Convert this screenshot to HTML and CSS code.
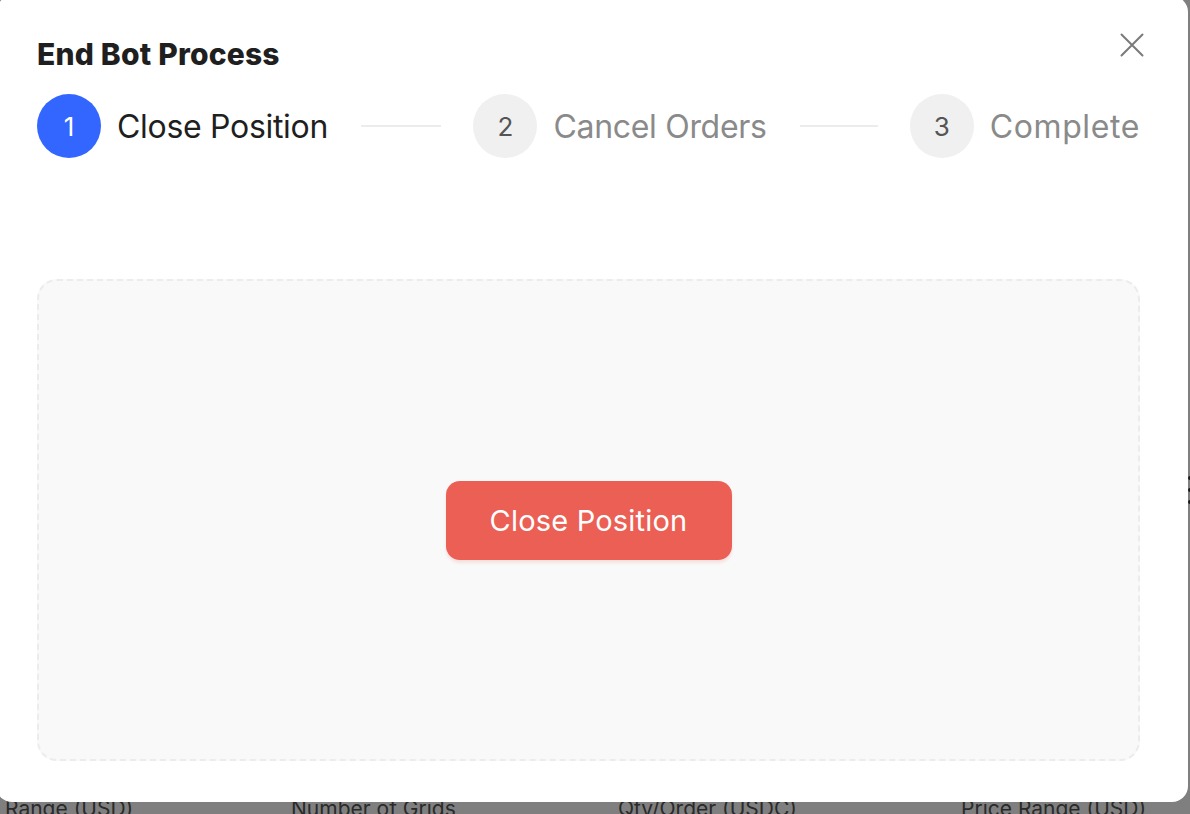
FILE: index.html
```html
<!DOCTYPE html>
<html lang="en">
<head>
<meta charset="utf-8">
<title>End Bot Process</title>
<link rel="stylesheet" href="styles.css">
</head>
<body>
<div class="page">
  <div class="page-row">
    <span class="col col-a">Range (USD)</span>
    <span class="col col-b">Number of Grids</span>
    <span class="col col-c">Qty/Order (USDC)</span>
    <span class="col col-d">Price Range (USD)</span>
  </div>
</div>
<div class="kebab"><i></i><i></i><i></i></div>

<div class="modal">
  <h2 class="modal-title">End Bot Process</h2>
  <button class="modal-close" aria-label="Close">
    <svg width="24" height="24" viewBox="0 0 24 24"><path d="M1.5 1.5 L22.5 22.5 M22.5 1.5 L1.5 22.5" stroke="#7a7a7a" stroke-width="2" fill="none" stroke-linecap="round"/></svg>
  </button>
  <div class="steps">
    <div class="step active">
      <span class="step-num">1</span>
      <span class="step-label">Close Position</span>
      <span class="step-line"></span>
    </div>
    <div class="step">
      <span class="step-num">2</span>
      <span class="step-label">Cancel Orders</span>
      <span class="step-line"></span>
    </div>
    <div class="step last">
      <span class="step-num">3</span>
      <span class="step-label">Complete</span>
    </div>
  </div>
  <div class="panel">
    <button class="btn-danger">Close Position</button>
  </div>
</div>
</body>
</html>
```

FILE: styles.css
```css
* { box-sizing: border-box; }
html, body {
  margin: 0;
  height: 100%;
  overflow: hidden;
}
body {
  background: #7f7f7f;
  font-family: "Inter", "Open Sans", sans-serif;
  position: relative;
}
.page {
  padding-top: 796px;
}
.page-row {
  display: flex;
  font-size: 21px;
  color: #2a2a2a;
  white-space: nowrap;
}
.col-a { margin-left: 5px; width: 286px; }
.col-b { width: 327px; }
.col-c { width: 343px; }

.kebab {
  position: absolute;
  left: 1188px;
  top: 476px;
  display: flex;
  flex-direction: column;
  gap: 8px;
}
.kebab i {
  display: block;
  width: 4px;
  height: 4px;
  background: #1a1a1a;
  border-radius: 2px;
}

.modal {
  position: absolute;
  left: -4px;
  top: -4px;
  width: 1192px;
  height: 806px;
  background: #fff;
  border-radius: 16px;
  padding: 40px 48px 41px 41px;
  display: flex;
  flex-direction: column;
}
.modal-title {
  margin: 0;
  font-size: 30px;
  font-weight: 800;
  line-height: 36px;
  color: #1f1f1f;
  letter-spacing: 0.2px;
}
.modal-close {
  position: absolute;
  right: 44px;
  top: 37px;
  width: 24px;
  height: 24px;
  padding: 0;
  border: 0;
  background: none;
  display: flex;
}

.steps {
  display: flex;
  align-items: center;
  margin-top: 22px;
}
.step {
  flex: 1;
  display: flex;
  align-items: center;
  padding-right: 32px;
  min-width: 0;
}
.step.last {
  flex: none;
  padding-right: 0;
}
.step-num {
  flex: none;
  width: 64px;
  height: 64px;
  border-radius: 50%;
  background: #f0f0f0;
  color: #555;
  font-size: 26px;
  display: flex;
  align-items: center;
  justify-content: center;
}
.step-label {
  margin-left: 16px;
  font-size: 32px;
  color: #8a8a8a;
  white-space: nowrap;
  letter-spacing: -0.3px;
}
.step.last .step-label {
  letter-spacing: 0.6px;
}
.step.active .step-num {
  background: #3366ff;
  color: #fff;
}
.step.active .step-label {
  color: #1f1f1f;
}
.step-line {
  flex: 1;
  height: 2px;
  background: #ececec;
  margin-left: 33px;
}

.panel {
  flex: 1;
  margin-top: 121px;
  background: #f9f9f9;
  border: 2px dashed #ececec;
  border-radius: 20px;
  display: flex;
  align-items: center;
  justify-content: center;
}
.btn-danger {
  width: 286px;
  height: 79px;
  border: 0;
  border-radius: 14px;
  background: #ec5f55;
  color: #fff;
  font-family: inherit;
  font-size: 29px;
  letter-spacing: 0.2px;
  box-shadow: 0 3px 3px rgba(236, 95, 85, 0.15);
}
```
